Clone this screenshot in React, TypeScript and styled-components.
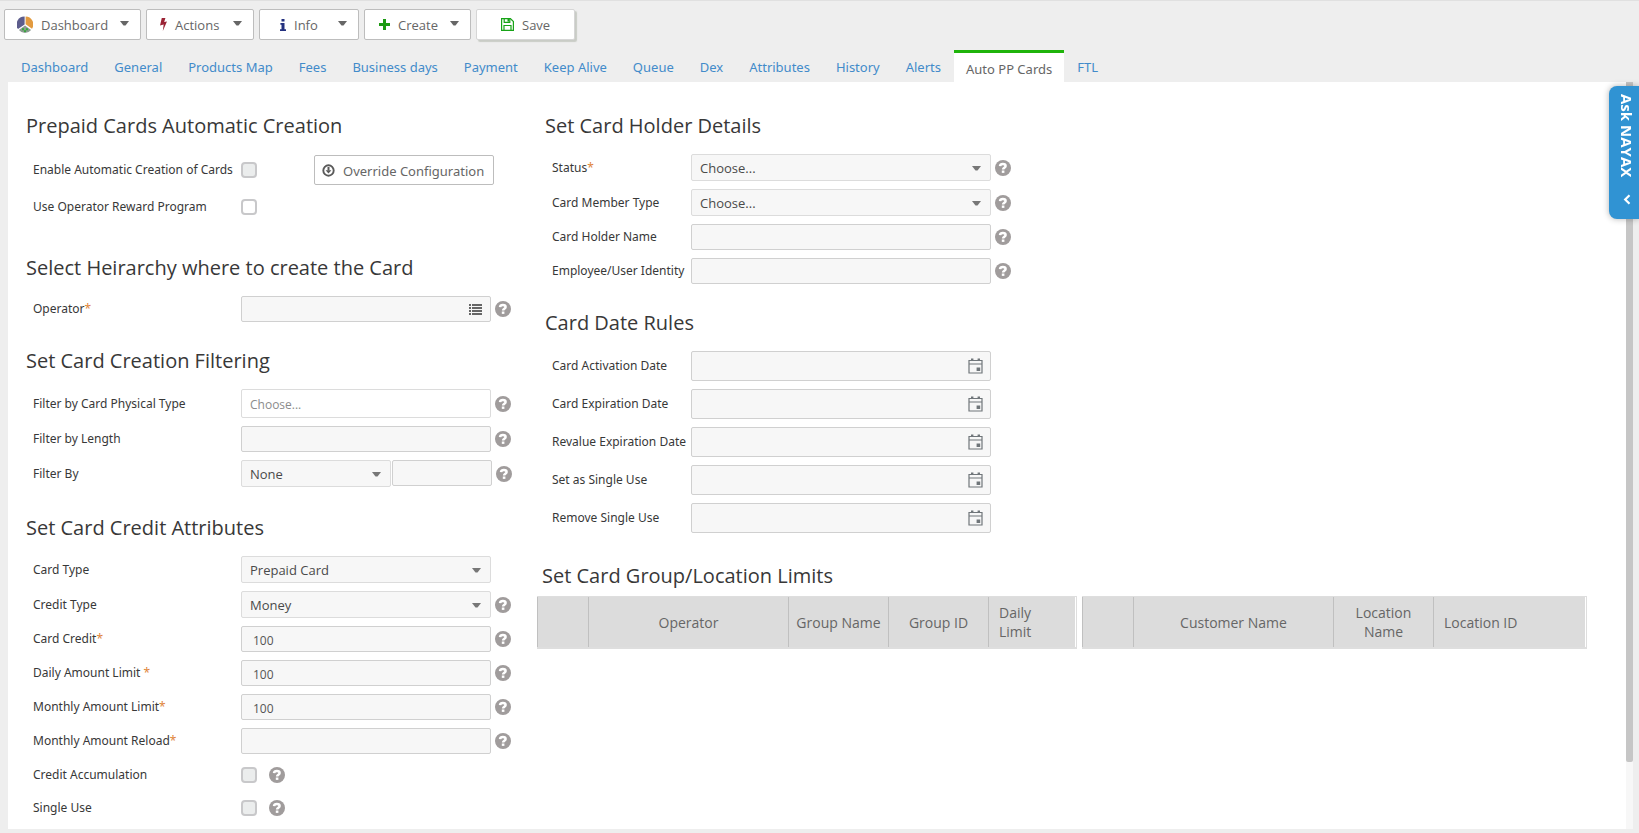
import React, { ReactNode, useId } from "react";
import styled, { createGlobalStyle, css } from "styled-components";

const GlobalStyle = createGlobalStyle`
  *, *::before, *::after { box-sizing: border-box; }
  body {
    margin: 0;
    background: #eee;
    color: #333;
    font-family: "Open Sans", "Noto Sans", sans-serif;
    font-size: 13px;
  }
  button, input, select { font-family: inherit; }
`;

const Page = styled.div`
  display: flex;
  flex-direction: column;
  min-height: 100vh;
  padding: 0 6px 4px 8px;
  border-top: 1px solid #e0e0e0;
`;

/* ---------- toolbar ---------- */

const Toolbar = styled.div`
  display: flex;
  gap: 5px;
  margin-left: -4px;
  padding: 8px 0 10px;
`;

const ToolButton = styled.button<{ $width: number; $indent: number; $raised?: boolean }>`
  display: flex;
  align-items: center;
  gap: 8px;
  width: ${(p) => p.$width}px;
  height: 31px;
  padding: 0 11px 0 ${(p) => p.$indent}px;
  border: 1px solid #bdbdbd;
  border-radius: 2px;
  background: #fff;
  color: #666;
  font-size: 13px;
  line-height: 18px;
  ${(p) =>
    p.$raised &&
    css`
      border-color: #d6d6d6;
      box-shadow: 2px 2px 1px #c9ccc6;
    `}
`;

const Caret = styled.svg`
  width: 9px;
  height: 5px;
  margin: 0 0 3px auto;
  fill: #666;
`;

/* ---------- tabs ---------- */

const Tabs = styled.nav`
  display: flex;
  align-items: stretch;
  height: 32px;
`;

const Tab = styled.a<{ $active?: boolean }>`
  padding: ${(p) => (p.$active ? "5px 12px 0" : "6px 13px 0")};
  border-top: 3px solid ${(p) => (p.$active ? "#1fb40a" : "transparent")};
  background: ${(p) => (p.$active ? "#fff" : "transparent")};
  color: ${(p) => (p.$active ? "#666" : "#428bca")};
  font-family: "Noto Sans", sans-serif;
  font-size: 13px;
  line-height: ${(p) => (p.$active ? 22 : 16)}px;
  text-decoration: none;
  white-space: nowrap;
`;

/* ---------- panel ---------- */

const Panel = styled.main`
  display: flex;
  flex: 1;
  background: #fff;
`;

const Content = styled.div`
  display: grid;
  grid-template-columns: 511px minmax(0, 1fr);
  flex: 1;
  min-width: 0;
  padding: 30px 39px 8px 18px;
`;

const ScrollTrack = styled.div`
  flex: none;
  width: 7px;
  background: #f7f7f7;
`;

const ScrollThumb = styled.div`
  height: 91%;
  border-radius: 0 0 2px 2px;
  background: #c6c6c6;
`;

const Section = styled.section<{ $after?: number; $indent?: number }>`
  margin-bottom: ${(p) => p.$after ?? 25}px;
  padding-left: ${(p) => p.$indent ?? 0}px;
`;

const Heading = styled.h2`
  margin: 0 0 14px;
  color: #383838;
  font-size: 20px;
  font-weight: 400;
  line-height: 28px;
  white-space: nowrap;
`;

const Rows = styled.div`
  display: grid;
  gap: 8px;
`;

const Row = styled.div<{ $labelWidth?: number }>`
  display: grid;
  grid-template-columns: ${(p) => p.$labelWidth ?? 208}px auto;
  justify-content: start;
  align-items: center;
  padding-left: 7px;
`;

const Label = styled.label`
  color: #383838;
  font-family: "Noto Sans", sans-serif;
  font-size: 12px;
  line-height: 16px;
  white-space: nowrap;
`;

const Star = styled.span`
  color: #e0853a;
`;

const Controls = styled.div<{ $gap?: number; $height?: number }>`
  display: flex;
  align-items: center;
  gap: ${(p) => p.$gap ?? 4}px;
  height: ${(p) => p.$height ?? 26}px;
`;

const Joined = styled.div`
  display: flex;
  gap: 1px;
`;

const fieldBox = css`
  border: 1px solid #d0d0d0;
  border-radius: 2px;
  background: #f7f7f7;
  color: #555;
`;

const TextInput = styled.input<{ $width: number }>`
  ${fieldBox}
  width: ${(p) => p.$width}px;
  height: 26px;
  padding: 2px 11px 0;
  font-size: 12px;
`;

const MultiInput = styled.input`
  ${fieldBox}
  width: 250px;
  height: 29px;
  padding: 2px 8px 0;
  border-color: #dcdcdc;
  background: #fff;
  font-size: 12px;
  &::placeholder { color: #8c8c8c; opacity: 1; }
`;

const SelectWrap = styled.div<{ $width: number }>`
  position: relative;
  width: ${(p) => p.$width}px;
`;

const Select = styled.select`
  ${fieldBox}
  display: block;
  width: 100%;
  height: 27px;
  padding: 1px 24px 0 8px;
  border-color: #dcdcdc;
  color: #4a4a4a;
  font-size: 13px;
  appearance: none;
`;

const SelectCaret = styled(Caret)`
  position: absolute;
  top: 12px;
  right: 10px;
  fill: #777;
  pointer-events: none;
`;

const IconField = styled.div<{ $width: number; $height: number }>`
  ${fieldBox}
  display: flex;
  align-items: center;
  width: ${(p) => p.$width}px;
  height: ${(p) => p.$height}px;
  padding-right: 7px;
`;

const BareInput = styled.input`
  flex: 1;
  min-width: 0;
  height: 100%;
  padding: 0 8px;
  border: 0;
  background: transparent;
  font-size: 12px;
`;

const IconButton = styled.button`
  display: flex;
  justify-content: center;
  width: 15px;
  padding: 0;
  border: 0;
  background: transparent;
`;

const Checkbox = styled.input<{ $muted?: boolean }>`
  width: 16px;
  height: 16px;
  margin: 0;
  border: 2px solid #c8c8ca;
  border-radius: 4px;
  background: ${(p) => (p.$muted ? "#ebeded" : "#fff")};
  appearance: none;
`;

const OverrideButton = styled.button`
  display: flex;
  align-items: center;
  gap: 8px;
  width: 180px;
  height: 30px;
  margin-left: 53px;
  padding: 1px 0 0 7px;
  border: 1px solid #bdbdbd;
  border-radius: 2px;
  background: #fff;
  color: #666;
  font-family: "Noto Sans", sans-serif;
  font-size: 13px;
  white-space: nowrap;
`;

/* ---------- limit tables ---------- */

const LimitTables = styled.div`
  display: flex;
  gap: 5px;
`;

const LimitTable = styled.table<{ $share: number }>`
  flex: ${(p) => p.$share} 1 0;
  min-width: 0;
  height: 53px;
  border-collapse: separate;
  border-spacing: 0;
  table-layout: fixed;
  border: 1px solid #dedede;
  border-width: 1px 1px 2px 0;
  background: #dcdcdc;
`;

const HeadCell = styled.th<{ $width?: number; $left?: boolean }>`
  width: ${(p) => (p.$width ? p.$width + "px" : "auto")};
  padding: 0 ${(p) => (p.$left ? 10 : 5)}px;
  border-left: 1px solid #c0c0c0;
  color: #666;
  font-size: 14px;
  font-weight: 400;
  line-height: 19px;
  text-align: ${(p) => (p.$left ? "left" : "center")};
  &:last-child { border-right: 1px solid #fff; }
`;

const HeadText = styled.span<{ $narrow?: boolean }>`
  display: inline-block;
  max-width: ${(p) => (p.$narrow ? "60px" : "none")};
`;

/* ---------- help tab ---------- */

const AskTab = styled.button`
  position: fixed;
  top: 86px;
  right: 0;
  display: flex;
  flex-direction: column;
  align-items: center;
  gap: 17px;
  width: 30px;
  height: 133px;
  padding: 8px 0 0 5px;
  border: 0;
  border-radius: 8px 0 0 8px;
  background: #3093d3;
  box-shadow: 0 0 6px rgba(0, 0, 0, 0.3);
  color: #fff;
  font-size: 15px;
  font-weight: 700;
  line-height: 20px;
`;

const VerticalText = styled.span`
  writing-mode: vertical-rl;
`;

/* ---------- icons ---------- */

const DownCaret = () => (
  <Caret viewBox="0 0 9 5" aria-hidden="true"><path d="M0 0h9L5.5 4.5h-2z" /></Caret>
);

const PieIcon = () => (
  <svg width="16" height="17" viewBox="0 0 16 17" aria-hidden="true">
    <path d="M7.600 8.500V.5A7.900 7.900 0 0 0 1 13z" fill="#5c5c8c" />
    <path d="M8.600 8.300V.5A7.900 7.900 0 0 1 15 12.800z" fill="#e29a3f" />
    <path d="M8 9.400 1.900 14a7.800 7.800 0 0 0 12.200 0z" fill="#8d9a92" />
    <path d="M5 12.300h2v2H5zM9 12.300h2v2H9zM7 14.300h2v1.800H7z" fill="#35a83a" />
  </svg>
);

const BoltIcon = () => (
  <svg width="7" height="13" viewBox="0 0 8 15" aria-hidden="true">
    <path d="M2 0h4.200L4.800 4.600 8 4 3.200 15l1-7.400L0 8.600z" fill="#9b2335" />
  </svg>
);

const InfoIcon = () => (
  <svg width="6" height="12" viewBox="0 0 6 12" aria-hidden="true">
    <path d="M1.500 0h3v2.600h-3zM.4 4h4.100v6.200H6V12H0v-1.800h1.500V5.800H.4z" fill="#23307f" />
  </svg>
);

const PlusIcon = () => (
  <svg width="11" height="11" viewBox="0 0 11 11" aria-hidden="true">
    <path d="M4 0h3v4h4v3H7v4H4V7H0V4h4z" fill="#1c9a12" />
  </svg>
);

const SaveIcon = () => (
  <svg width="13" height="13" viewBox="0 0 13 13" fill="none" stroke="#17a317" aria-hidden="true">
    <path d="M.6.6h8.800l3 3v8.800H.6z" strokeWidth="1.200" />
    <path d="M3.200.6v3.800h5.600V.6M3 12V7.500h7V12" strokeWidth="1.200" />
    <path d="M6.500 1h1.600v2.600H6.500z" fill="#17a317" stroke="none" />
  </svg>
);

const DownCircleIcon = () => (
  <svg width="13" height="13" viewBox="0 0 13 13" fill="none" stroke="#5a5a5a" aria-hidden="true">
    <circle cx="6.500" cy="6.500" r="5.200" strokeWidth="1.900" />
    <path d="M6.500 3v3.500" strokeWidth="2" />
    <path d="M3.600 6.200h5.800L6.500 9.500z" fill="#5a5a5a" stroke="none" />
  </svg>
);

const ListIcon = () => (
  <svg width="13" height="11" viewBox="0 0 13 11" fill="#666" aria-hidden="true">
    <path d="M0 0h2v2H0zM0 3h2v2H0zM0 6h2v2H0zM0 9h2v2H0zM3 0h10v2H3zM3 3h10v2H3zM3 6h10v2H3zM3 9h10v2H3z" />
  </svg>
);

const CalendarIcon = () => (
  <svg width="15" height="16" viewBox="0 0 15 16" aria-hidden="true">
    <path d="M1 2.500h13v12.500H1zM1 6h13" fill="none" stroke="#70767a" strokeWidth="1.200" />
    <path d="M3 .6h2.400v2.400H3zM9.600.6H12v2.400H9.600zM8.600 9.400h3.600v3.600H8.600z" fill="#70767a" />
  </svg>
);

const HelpIcon = () => (
  <svg width="16" height="16" viewBox="0 0 16 16" role="img" aria-label="Help">
    <circle cx="8" cy="8" r="8" fill="#a09c9c" />
    <path d="M5 6.200C5.200 4.600 6.300 4 7.900 4c1.700 0 2.700.7 2.700 2 0 1.800-2.500 1.600-2.500 3.500" fill="none" stroke="#fff" strokeWidth="2.500" />
    <path d="M6.800 10.500h2.600v2.400H6.800z" fill="#fff" />
  </svg>
);

const ChevronLeft = () => (
  <svg width="8" height="11" viewBox="0 0 8 11" aria-hidden="true">
    <path d="M6.500 1.300 2.200 5.500l4.300 4.200" fill="none" stroke="#fff" strokeWidth="2.200" />
  </svg>
);

/* ---------- form fields ---------- */

type FieldProps = {
  label: string;
  required?: boolean;
  labelWidth?: number;
  gap?: number;
  height?: number;
  help?: boolean;
  children: (id: string) => ReactNode;
};

const Field = ({ label, required, labelWidth, gap, height, help, children }: FieldProps) => {
  const id = useId();
  return (
    <Row $labelWidth={labelWidth}>
      <Label htmlFor={id}>{label}{required && <Star>*</Star>}</Label>
      <Controls $gap={gap} $height={height}>
        {children(id)}
        {help && <HelpIcon />}
      </Controls>
    </Row>
  );
};

const Dropdown = ({ id, width, value }: { id: string; width: number; value: string }) => (
  <SelectWrap $width={width}>
    <Select id={id} defaultValue={value}><option>{value}</option></Select>
    <SelectCaret viewBox="0 0 9 5" aria-hidden="true"><path d="M0 0h9L5.500 4.500h-2z" /></SelectCaret>
  </SelectWrap>
);

const tabs = ["Dashboard", "General", "Products Map", "Fees", "Business days", "Payment", "Keep Alive",
  "Queue", "Dex", "Attributes", "History", "Alerts", "Auto PP Cards", "FTL"];

const amounts = [
  { label: "Card Credit", value: "100" },
  { label: "Daily Amount Limit ", value: "100" },
  { label: "Monthly Amount Limit", value: "100" },
  { label: "Monthly Amount Reload", value: "" },
];

const dates = ["Card Activation Date", "Card Expiration Date", "Revalue Expiration Date", "Set as Single Use", "Remove Single Use"];

export default function App() {
  return (
    <Page>
      <GlobalStyle />
      <Toolbar>
        <ToolButton $width={137} $indent={12}><PieIcon />Dashboard<DownCaret /></ToolButton>
        <ToolButton $width={108} $indent={13}><BoltIcon />Actions<DownCaret /></ToolButton>
        <ToolButton $width={100} $indent={20}><InfoIcon />Info<DownCaret /></ToolButton>
        <ToolButton $width={107} $indent={14}><PlusIcon />Create<DownCaret /></ToolButton>
        <ToolButton $width={99} $indent={24} $raised><SaveIcon />Save</ToolButton>
      </Toolbar>

      <Tabs>
        {tabs.map((t) => (
          <Tab key={t} href="#" $active={t === "Auto PP Cards"}>{t}</Tab>
        ))}
      </Tabs>

      <Panel>
        <Content>
          <div>
            <Section $after={34}>
              <Heading>Prepaid Cards Automatic Creation</Heading>
              <Rows>
                <Field label="Enable Automatic Creation of Cards" height={32}>
                  {(id) => (
                    <>
                      <Checkbox id={id} type="checkbox" $muted />
                      <OverrideButton><DownCircleIcon />Override Configuration</OverrideButton>
                    </>
                  )}
                </Field>
                <Field label="Use Operator Reward Program">
                  {(id) => <Checkbox id={id} type="checkbox" />}
                </Field>
              </Rows>
            </Section>

            <Section>
              <Heading>Select Heirarchy where to create the Card</Heading>
              <Field label="Operator" required help>
                {(id) => (
                  <IconField $width={250} $height={26}>
                    <BareInput id={id} />
                    <IconButton aria-label="Pick operator"><ListIcon /></IconButton>
                  </IconField>
                )}
              </Field>
            </Section>

            <Section $after={27}>
              <Heading>Set Card Creation Filtering</Heading>
              <Rows>
                <Field label="Filter by Card Physical Type" height={29} help>
                  {(id) => <MultiInput id={id} placeholder="Choose..." />}
                </Field>
                <Field label="Filter by Length" help>
                  {(id) => <TextInput id={id} $width={250} />}
                </Field>
                <Field label="Filter By" height={27} help>
                  {(id) => (
                    <Joined>
                      <Dropdown id={id} width={150} value="None" />
                      <TextInput aria-label="Filter value" $width={100} />
                    </Joined>
                  )}
                </Field>
              </Rows>
            </Section>

            <Section $after={0}>
              <Heading>Set Card Credit Attributes</Heading>
              <Rows>
                <Field label="Card Type" height={27}>
                  {(id) => <Dropdown id={id} width={250} value="Prepaid Card" />}
                </Field>
                <Field label="Credit Type" height={27} help>
                  {(id) => <Dropdown id={id} width={250} value="Money" />}
                </Field>
                {amounts.map((a) => (
                  <Field key={a.label} label={a.label} required help>
                    {(id) => <TextInput id={id} $width={250} defaultValue={a.value} />}
                  </Field>
                ))}
                {["Credit Accumulation", "Single Use"].map((label) => (
                  <Field key={label} label={label} height={25} gap={12} help>
                    {(id) => <Checkbox id={id} type="checkbox" $muted />}
                  </Field>
                ))}
              </Rows>
            </Section>
          </div>

          <div>
            <Section $after={25} $indent={8}>
              <Heading>Set Card Holder Details</Heading>
              <Rows>
                <Field label="Status" required labelWidth={139} height={27} help>
                  {(id) => <Dropdown id={id} width={300} value="Choose..." />}
                </Field>
                <Field label="Card Member Type" labelWidth={139} height={27} help>
                  {(id) => <Dropdown id={id} width={300} value="Choose..." />}
                </Field>
                <Field label="Card Holder Name" labelWidth={139} help>
                  {(id) => <TextInput id={id} $width={300} />}
                </Field>
                <Field label="Employee/User Identity" labelWidth={139} help>
                  {(id) => <TextInput id={id} $width={300} />}
                </Field>
              </Rows>
            </Section>

            <Section $after={29} $indent={8}>
              <Heading>Card Date Rules</Heading>
              <Rows>
                {dates.map((label) => (
                  <Field key={label} label={label} labelWidth={139} height={30}>
                    {(id) => (
                      <IconField $width={300} $height={30}>
                        <BareInput id={id} />
                        <IconButton aria-label="Open calendar"><CalendarIcon /></IconButton>
                      </IconField>
                    )}
                  </Field>
                ))}
              </Rows>
            </Section>

            <GroupLimits />
          </div>
        </Content>
        <ScrollTrack aria-hidden="true"><ScrollThumb /></ScrollTrack>
      </Panel>

      <AskTab><VerticalText>Ask NAYAX</VerticalText><ChevronLeft /></AskTab>
    </Page>
  );
}

const LimitHeading = styled(Heading)`
  margin-bottom: 6px;
  padding-left: 5px;
`;

function GroupLimits() {
  return (
    <Section $after={0}>
      <LimitHeading>Set Card Group/Location Limits</LimitHeading>
      <LimitTables>
        <LimitTable $share={540}>
          <thead>
            <tr>
              <HeadCell $width={51} />
              <HeadCell $width={200}>Operator</HeadCell>
              <HeadCell $width={100}>Group Name</HeadCell>
              <HeadCell $width={100}>Group ID</HeadCell>
              <HeadCell $left><HeadText $narrow>Daily Limit</HeadText></HeadCell>
            </tr>
          </thead>
        </LimitTable>
        <LimitTable $share={505}>
          <thead>
            <tr>
              <HeadCell $width={51} />
              <HeadCell $width={200}>Customer Name</HeadCell>
              <HeadCell $width={100}>Location Name</HeadCell>
              <HeadCell $left>Location ID</HeadCell>
            </tr>
          </thead>
        </LimitTable>
      </LimitTables>
    </Section>
  );
}
